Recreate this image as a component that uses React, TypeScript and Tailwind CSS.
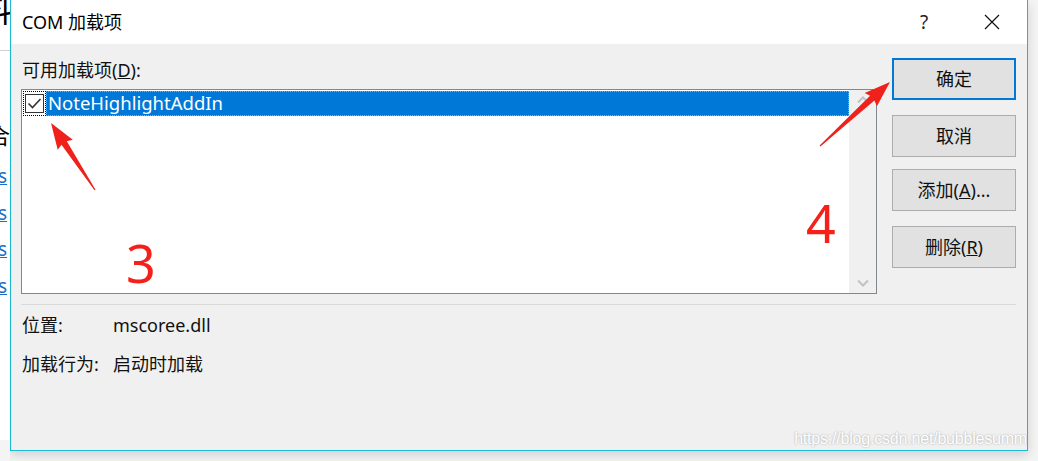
import React from "react";

const font = { fontFamily: '"Noto Sans", "Noto Sans CJK SC", sans-serif' };

function arrowPoints(tx: number, ty: number, hx: number, hy: number) {
  const dx = hx - tx, dy = hy - ty;
  const L = Math.hypot(dx, dy);
  const ux = dx / L, uy = dy / L;
  const nx = -uy, ny = ux;
  const headLen = 24, headW = 9, shaftW = 3.2, tailW = 0.6;
  const bx = hx - ux * headLen, by = hy - uy * headLen;
  const p = (x: number, y: number) => `${x.toFixed(1)},${y.toFixed(1)}`;
  return [
    p(tx + nx * tailW, ty + ny * tailW),
    p(bx + nx * shaftW, by + ny * shaftW),
    p(bx + nx * headW - ux * 2, by + ny * headW - uy * 2),
    p(hx, hy),
    p(bx - nx * headW - ux * 2, by - ny * headW - uy * 2),
    p(bx - nx * shaftW, by - ny * shaftW),
    p(tx - nx * tailW, ty - ny * tailW),
  ].join(" ");
}

function Btn({ children, primary }: { children: React.ReactNode; primary?: boolean }) {
  return (
    <div
      className={`w-[124px] h-[42px] flex items-center justify-center bg-[#e1e1e1] text-[18px] text-[#111] ${
        primary ? "border-2 border-[#0078d7]" : "border border-[#adadad]"
      }`}
    >
      {children}
    </div>
  );
}

export default function App() {
  return (
    <div className="relative w-[1038px] h-[461px] bg-[#f4f4f4] overflow-hidden flex" style={font}>
      {/* background window strip */}
      <div className="w-[10px] h-[461px] bg-white relative overflow-hidden shrink-0">
        <div className="absolute left-[-22px] top-[-8px] text-[34px] leading-none text-black">料</div>
        <div className="absolute left-0 top-[50px] w-[10px] h-px bg-[#d0d0d0]"></div>
        <div className="absolute left-[-12px] top-[124px] text-[22px] leading-none text-black">合</div>
        <div className="absolute left-[-2px] top-[167px] text-[19px] leading-none text-[#1a6fc9] underline">s</div>
        <div className="absolute left-[-2px] top-[204px] text-[19px] leading-none text-[#1a6fc9] underline">s</div>
        <div className="absolute left-[-2px] top-[240px] text-[19px] leading-none text-[#1a6fc9] underline">s</div>
        <div className="absolute left-[-2px] top-[277px] text-[19px] leading-none text-[#1a6fc9] underline">s</div>
        <div className="absolute left-0 top-[440px] w-[10px] h-[21px] bg-[#f4f4f4]"></div>
      </div>

      {/* dialog */}
      <div className="w-[1018px] h-[451px] border-x border-b border-[#1cb9d2] bg-[#f0f0f0] flex flex-col shrink-0 shadow-[0_4px_10px_rgba(0,0,0,0.15)]">
        {/* title bar */}
        <div className="h-[44px] bg-white flex items-center pl-[11px] shrink-0">
          <div className="text-[18px] text-black flex-1">COM 加载项</div>
          <div className="text-[19px] text-[#222] w-[20px] mr-[50px] text-center">?</div>
          <svg width="16" height="16" viewBox="0 0 16 16" className="mr-[27px]">
            <path d="M1 1 L15 15 M15 1 L1 15" stroke="#111" strokeWidth="1.2" fill="none" />
          </svg>
        </div>

        {/* body */}
        <div className="flex-1 flex flex-col px-[10px]">
          <div className="flex">
            <div className="flex flex-col w-[856px]">
              <div className="text-[18px] text-[#111] mt-[14px] h-[31px] leading-[24px] pl-px">
                可用加载项(<span className="underline">D</span>):
              </div>
              <div className="h-[205px] border border-[#828790] bg-white flex">
                <div className="flex-1 pt-px pl-px">
                  <div className="flex h-[25px]">
                    <div className="w-[23px] h-[25px] border border-dotted border-black flex items-center justify-center">
                      <div className="w-[19px] h-[19px] border border-[#333] bg-white flex items-center justify-center">
                        <svg width="15" height="13" viewBox="0 0 15 13">
                          <path d="M1.5 6.5 L5.5 10.5 L13.5 2" stroke="#333" strokeWidth="1.6" fill="none" />
                        </svg>
                      </div>
                    </div>
                    <div className="flex-1 h-[25px] bg-[#0078d7] border border-dotted border-[#f0a030] text-white text-[18.5px] leading-[22px] pl-px">
                      NoteHighlightAddIn
                    </div>
                  </div>
                </div>
                <div className="w-[27px] bg-[#f0f0f0] flex flex-col justify-between items-center py-[6px]">
                  <svg width="12" height="8" viewBox="0 0 12 8">
                    <path d="M1 6.5 L6 1.5 L11 6.5" stroke="#c2c2c2" strokeWidth="2" fill="none" />
                  </svg>
                  <svg width="12" height="8" viewBox="0 0 12 8">
                    <path d="M1 1.5 L6 6.5 L11 1.5" stroke="#c2c2c2" strokeWidth="2" fill="none" />
                  </svg>
                </div>
              </div>
            </div>
            <div className="flex flex-col ml-[15px] pt-[14px] gap-[15px]">
              <Btn primary>确定</Btn>
              <Btn>取消</Btn>
              <div className="-mt-[3px]">
                <Btn>
                  添加(<span className="underline">A</span>)...
                </Btn>
              </div>
              <Btn>
                删除(<span className="underline">R</span>)
              </Btn>
            </div>
          </div>
          <div className="h-px bg-[#d9d9d9] mt-[10px] mr-[1px]"></div>
          <div className="flex text-[18px] text-[#111] mt-[8px] h-[24px] items-center pl-px">
            <div className="w-[91px]">位置:</div>
            <div>mscoree.dll</div>
          </div>
          <div className="flex text-[18px] text-[#111] mt-[15px] h-[24px] items-center pl-px">
            <div className="w-[91px]">加载行为:</div>
            <div>启动时加载</div>
          </div>
          <div className="flex-1 flex items-end justify-end pb-[1px] -mr-[10px] overflow-hidden">
            <div
              className="text-[16px] text-white leading-[20px] whitespace-nowrap"
              style={{ textShadow: "0 0 2px rgba(0,0,0,0.35)", fontFamily: '"Liberation Sans", Arial, sans-serif', letterSpacing: "-0.2px" }}
            >
              https://blog.csdn.net/bubblesumm
            </div>
          </div>
        </div>
      </div>

      {/* red annotations overlay */}
      <svg className="absolute left-0 top-0 pointer-events-none" width="1038" height="461">
        <polygon points={arrowPoints(95, 190, 51, 123)} fill="#f0201a" />
        <polygon points={arrowPoints(820, 146, 890, 82)} fill="#f0201a" />
      </svg>
      <div
        className="absolute left-[126px] top-[237px] text-[52px] leading-none text-[#f5201a]"
        style={{ fontFamily: '"Noto Sans", sans-serif' }}
      >
        3
      </div>
      <div
        className="absolute left-[806px] top-[197px] text-[52px] leading-none text-[#f5201a]"
        style={{ fontFamily: '"Noto Sans", sans-serif' }}
      >
        4
      </div>
    </div>
  );
}
